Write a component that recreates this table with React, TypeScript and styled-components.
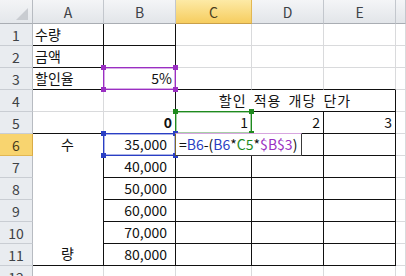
import React from "react"
import styled, { createGlobalStyle, css } from "styled-components"

const GlobalStyle = createGlobalStyle`
  html, body {
    margin: 0;
    padding: 0;
    background: #ffffff;
    overflow: hidden;
  }
`

const grid = "#d9dadc"
const ink = "#111111"

const refColors = {
  blue: "#2a3fc4",
  green: "#1e8a1e",
  purple: "#9a2fc2",
}

type RefColor = keyof typeof refColors

const Sheet = styled.div`
  display: grid;
  grid-template-columns: 33px 71px 72px 76px 72px 72px 1fr;
  grid-template-rows: 24px repeat(12, 22px);
  width: 406px;
  height: 276px;
  overflow: hidden;
  font-family: "Noto Sans CJK KR", "Noto Sans", sans-serif;
  font-size: 14px;
  color: ${ink};
  background: #ffffff;
`

const Corner = styled.div`
  position: relative;
  background: linear-gradient(#f3f4f6, #e4e7eb);
  border-right: 1px solid #b7bbc1;
  border-bottom: 1px solid #a9adb3;

  svg {
    position: absolute;
    right: 4px;
    bottom: 3px;
  }
`

const headerIdle = css`
  background: linear-gradient(#f4f5f7, #e2e5e9);
  color: #3e4246;
`

const headerActive = css`
  background: linear-gradient(#fdeaa6, #f6cd5f);
  color: #4a3d1e;
`

const ColHeader = styled.div<{ $active?: boolean }>`
  display: flex;
  align-items: center;
  justify-content: center;
  ${p => (p.$active ? headerActive : headerIdle)};
  border-right: 1px solid ${p => (p.$active ? "#e2b752" : "#c3c7cd")};
  border-bottom: 1px solid ${p => (p.$active ? "#c9a04a" : "#a9adb3")};
  font-size: 14px;
  padding-top: 1px;
`

const RowHeader = styled.div<{ $active?: boolean }>`
  display: flex;
  align-items: center;
  justify-content: center;
  ${p => (p.$active ? headerActive : headerIdle)};
  background: ${p => (p.$active ? "#f8d46f" : "#e9ecf0")};
  border-right: 1px solid ${p => (p.$active ? "#d9ab45" : "#b7bbc1")};
  border-bottom: 1px solid ${p => (p.$active ? "#e2b752" : "#c9cdd3")};
  font-size: 14px;
`

const Cell = styled.div<{
  $align?: "left" | "right" | "center"
  $bold?: boolean
  $br?: boolean
  $bb?: boolean
  $cols?: number
  $rows?: number
  $padRight?: number
}>`
  position: relative;
  display: flex;
  align-items: flex-end;
  justify-content: ${p =>
    p.$align === "right" ? "flex-end" : p.$align === "center" ? "center" : "flex-start"};
  padding: 0 ${p => p.$padRight ?? 3}px 1px 2px;
  line-height: 19px;
  font-weight: ${p => (p.$bold ? 700 : 400)};
  white-space: nowrap;
  border-right: 1px solid ${p => (p.$br ? ink : grid)};
  border-bottom: 1px solid ${p => (p.$bb ? ink : grid)};
  ${p => p.$cols && `grid-column: span ${p.$cols};`}
  ${p => p.$rows && `grid-row: span ${p.$rows};`}
`

const Title = styled.span`
  letter-spacing: 1px;
  word-spacing: 3px;
`

const SpreadLabel = styled.div`
  display: flex;
  flex-direction: column;
  justify-content: space-between;
  align-items: center;
  width: 100%;
  height: 100%;
  padding: 1px 0 1px;
  box-sizing: border-box;
`

const RefBox = styled.div<{ $color: RefColor }>`
  position: absolute;
  inset: -1px;
  border: 1px solid ${p => refColors[p.$color]};
  box-shadow: inset 0 0 0 1px ${p => refColors[p.$color]}66;
  pointer-events: none;
  z-index: 2;
`

const Handle = styled.span<{ $color: RefColor; $x: "left" | "right"; $y: "top" | "bottom" }>`
  position: absolute;
  width: 5px;
  height: 5px;
  background: ${p => refColors[p.$color]};
  ${p => p.$x}: -3px;
  ${p => p.$y}: -3px;
`

const EditBox = styled.div`
  position: absolute;
  top: -1px;
  left: -1px;
  width: 127px;
  height: 23px;
  box-sizing: border-box;
  background: #ffffff;
  border: 1px solid #3a3a3a;
  border-top-color: #d7a6df;
  border-left-color: #7a6a2a;
  display: flex;
  align-items: center;
  padding: 0 2px 0 3px;
  line-height: 19px;
  z-index: 3;
`

const Tok = styled.span<{ $color?: RefColor }>`
  color: ${p => (p.$color ? refColors[p.$color] : ink)};
`

function RefMark({ color }: { color: RefColor }) {
  return (
    <RefBox $color={color}>
      <Handle $color={color} $x="left" $y="top" />
      <Handle $color={color} $x="right" $y="top" />
      <Handle $color={color} $x="left" $y="bottom" />
      <Handle $color={color} $x="right" $y="bottom" />
    </RefBox>
  )
}

const columns = ["A", "B", "C", "D", "E", ""]

const prices = ["35,000", "40,000", "50,000", "60,000", "70,000", "80,000"]

export default function App() {
  return (
    <>
      <GlobalStyle />
      <Sheet>
        <Corner>
          <svg width="12" height="12" viewBox="0 0 12 12">
            <polygon points="12,0 12,12 0,12" fill="#c9ccd1" />
          </svg>
        </Corner>
        {columns.map(c => (
          <ColHeader key={c || "F"} $active={c === "C"}>
            {c}
          </ColHeader>
        ))}

        <RowHeader>1</RowHeader>
        <Cell $br $bb>수량</Cell>
        <Cell $br $bb />
        <Cell />
        <Cell />
        <Cell />
        <Cell />

        <RowHeader>2</RowHeader>
        <Cell $br $bb>금액</Cell>
        <Cell $br $bb />
        <Cell />
        <Cell />
        <Cell />
        <Cell />

        <RowHeader>3</RowHeader>
        <Cell $br $bb>할인율</Cell>
        <Cell $align="right" $br $bb>
          5%
          <RefMark color="purple" />
        </Cell>
        <Cell $bb />
        <Cell $bb />
        <Cell $bb />
        <Cell />

        <RowHeader>4</RowHeader>
        <Cell />
        <Cell $br />
        <Cell $cols={3} $align="center" $br $bb>
          <Title>할인 적용 개당 단가</Title>
        </Cell>
        <Cell />

        <RowHeader>5</RowHeader>
        <Cell $bb />
        <Cell $align="right" $bold $br $bb>0</Cell>
        <Cell $align="right" $br $bb>
          1
          <RefMark color="green" />
        </Cell>
        <Cell $align="right" $br $bb>2</Cell>
        <Cell $align="right" $br $bb>3</Cell>
        <Cell />

        {prices.map((price, i) => (
          <React.Fragment key={price}>
            <RowHeader $active={i === 0}>{i + 6}</RowHeader>
            {i === 0 && (
              <Cell $rows={6} $br $bb>
                <SpreadLabel>
                  <span>수</span>
                  <span>량</span>
                </SpreadLabel>
              </Cell>
            )}
            <Cell $align="right" $padRight={8} $br $bb>
              {price}
              {i === 0 && <RefMark color="blue" />}
            </Cell>
            <Cell $br $bb>
              {i === 0 && (
                <EditBox>
                  <Tok>=</Tok>
                  <Tok $color="blue">B6</Tok>
                  <Tok>-(</Tok>
                  <Tok $color="blue">B6</Tok>
                  <Tok>*</Tok>
                  <Tok $color="green">C5</Tok>
                  <Tok>*</Tok>
                  <Tok $color="purple">$B$3</Tok>
                  <Tok>)</Tok>
                </EditBox>
              )}
            </Cell>
            <Cell $br $bb />
            <Cell $br $bb />
            <Cell />
          </React.Fragment>
        ))}

        <RowHeader>12</RowHeader>
        <Cell />
        <Cell />
        <Cell />
        <Cell />
        <Cell />
        <Cell />
      </Sheet>
    </>
  )
}
